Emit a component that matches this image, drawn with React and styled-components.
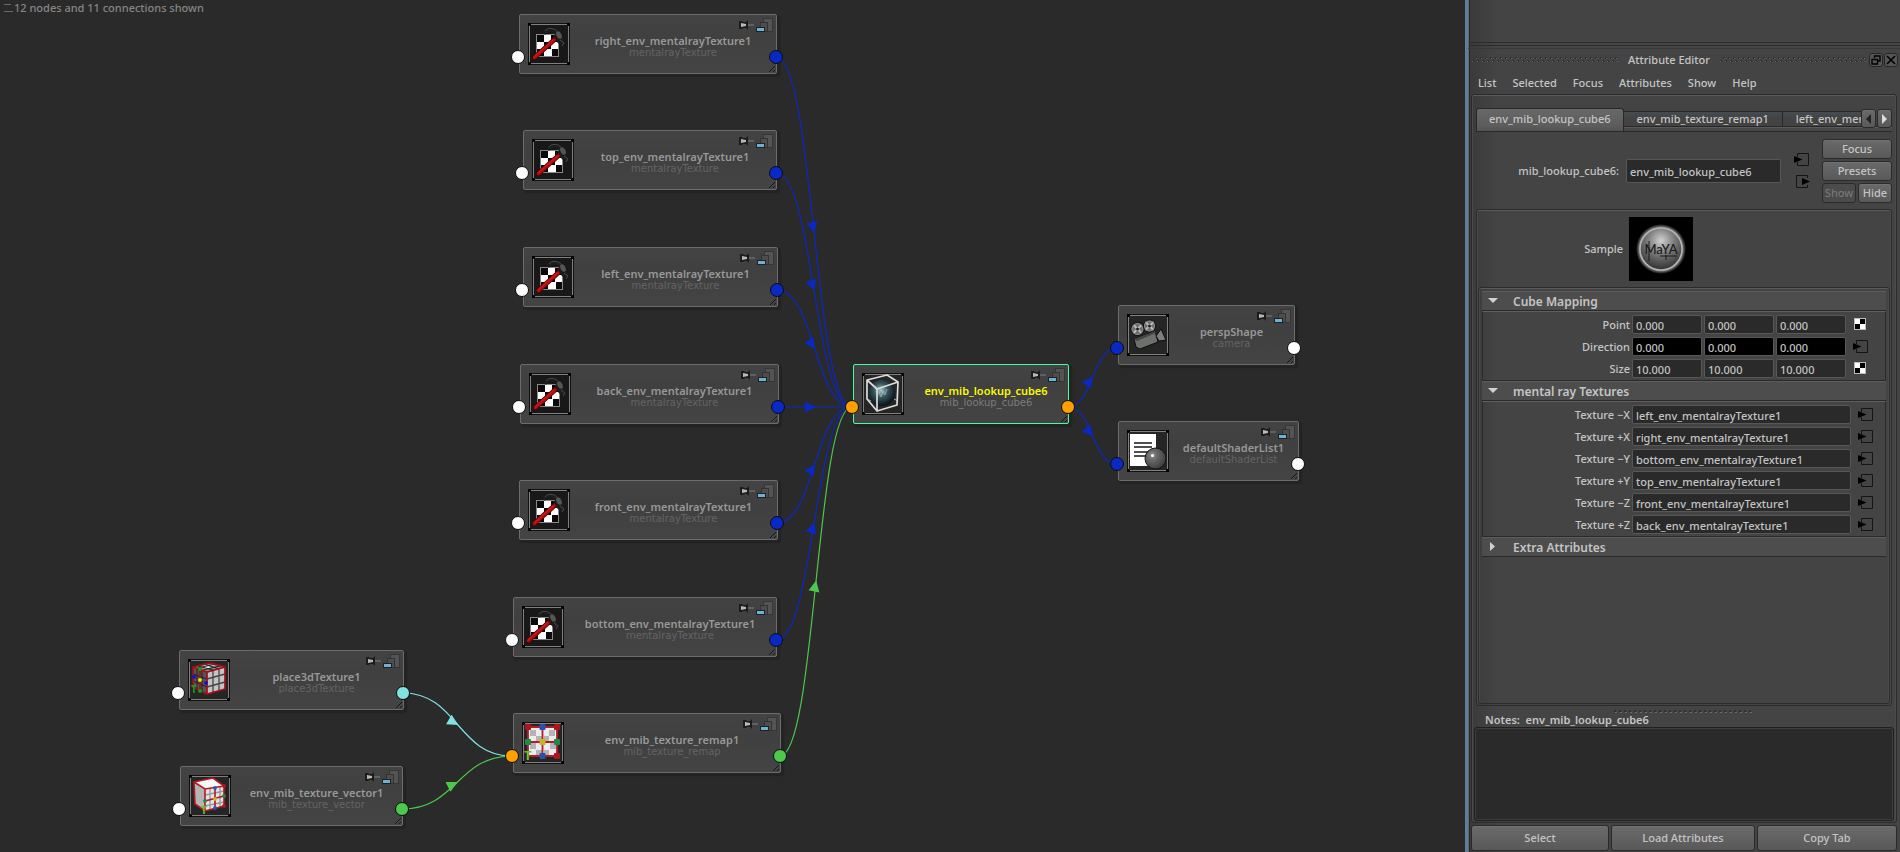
import React, { useId } from 'react';
import styled, { createGlobalStyle, css } from 'styled-components';

const GlobalStyle = createGlobalStyle`
  *, *::before, *::after { box-sizing: border-box; }
  body {
    margin: 0;
    background: #2a2a2a;
    color: #c4c4c4;
    font: 500 11px/14px "Noto Sans", "Open Sans", sans-serif;
  }
  button, input, textarea { font: inherit; color: inherit; margin: 0; }
`;

/* ---------- shell ---------- */

const Shell = styled.div`
  display: flex;
  min-height: 100vh;
`;

const Canvas = styled.main`
  position: relative;
  flex: 1;
  min-width: 0;
  overflow: hidden;
  background: #2a2a2a;
`;

const Status = styled.p`
  display: flex;
  align-items: center;
  gap: 1px;
  margin: 0;
  padding: 1px 3px;
  color: #868686;
`;

const Wires = styled.svg`
  position: absolute;
  top: 0;
  left: 0;
  width: 100%;
  height: 100%;
`;

/* ---------- graph nodes ---------- */

const NodeCard = styled.article`
  position: absolute;
  left: ${(p) => p.$x}px;
  top: ${(p) => p.$y}px;
  width: ${(p) => p.$w}px;
  height: 60px;
  display: flex;
  padding: 8px 0 0 8px;
  border: 1px solid ${(p) => (p.$active ? '#4dfa9f' : '#6c6c6c')};
  border-radius: 2px;
  background: linear-gradient(#434343, #404040 40%, #444);
  box-shadow: 2px 2px 1px 1px #232323;
`;

const Thumb = styled.svg`
  flex: none;
  width: 42px;
  height: 42px;
`;

const NodeText = styled.div`
  flex: 1;
  min-width: 0;
  padding-top: 12px;
  text-align: center;
  white-space: nowrap;
`;

const NodeName = styled.h3`
  margin: 0;
  font-size: 11px;
  line-height: 12px;
  font-weight: 600;
  color: ${(p) => (p.$active ? '#fafa00' : '#989898')};
`;

const NodeType = styled.p`
  margin: 0;
  font: 10px/12px "DejaVu Sans", sans-serif;
  color: ${(p) => (p.$active ? '#7c7c7c' : '#646464')};
`;

const Port = styled.span`
  position: absolute;
  top: 35px;
  ${(p) => (p.$side === 'in' ? css`left: -9px;` : css`right: -7px;`)}
  width: 14px;
  height: 14px;
  border: 1px solid #0c0c0c;
  border-radius: 50%;
  background: ${(p) => p.$color};
`;

const NodeBadges = styled.svg`
  position: absolute;
  top: 2px;
  right: 2px;
  width: 36px;
  height: 16px;
`;

const ResizeGrip = styled.svg`
  position: absolute;
  right: 0;
  bottom: 0;
  width: 8px;
  height: 8px;
`;

function ThumbFrame({ fill = '#252525', children }) {
  return (
    <Thumb viewBox="0 0 42 42" aria-hidden="true">
      <rect width="42" height="42" rx="1" fill="#111" />
      <rect x="1.5" y="1.5" width="39" height="39" fill={fill} stroke="#808080" />
      <path d="M1 3V1H3M39 1H41V3M41 39V41H39M3 41H1V39" fill="none" stroke="#000" strokeWidth="2" />
      {children}
    </Thumb>
  );
}

function HammerThumb() {
  return (
    <ThumbFrame fill="#181818">
      <rect x="8.500" y="11.500" width="22" height="22" fill="#fff" stroke="#888" />
      <path d="M9 12h7v7h-7zM23 12h7v7h-7zM16 19h7v7h-7zM9 26h7v7h-7zM24 26h6v7h-6z" fill="#0a0a0a" />
      <path d="M15 9C17 4 24 3 29 7L36 17 35 22 31 21 25 15 27 11C24 7 19 8 17 12Z" fill="#1d1d1d" />
      <path d="M17 8C20 4 26 5 29 8M32 17L36 20 34 23" fill="none" stroke="#4a4a4a" strokeWidth="1" />
      <ellipse cx="31" cy="12" rx="2.500" ry="4" transform="rotate(-25 31 12)" fill="#555" />
      <path d="M6.500 34.500L26 17" stroke="#4a0404" strokeWidth="5" strokeLinecap="round" />
      <path d="M6.500 34.500L26 17" stroke="#b80d0d" strokeWidth="3.400" strokeLinecap="round" />
      <path d="M6.500 33.500L25 17" stroke="#d02424" strokeWidth="1" strokeLinecap="round" />
    </ThumbFrame>
  );
}

const Handle = ({ x, y, c, s = 1.7 }) => (
  <rect x={x - s} y={y - s} width={s * 2} height={s * 2} rx="1" fill={c} />
);

function PlaceThumb() {
  return (
    <ThumbFrame>
      <path d="M5 8L22 4 37 8 19 13Z" fill="#8d8d8d" />
      <path d="M5 8L19 13V35L5 28Z" fill="#555" />
      <path d="M19 13L37 8V30L19 35Z" fill="#c4c4c4" />
      <path d="M12 8L17 6 24 8 18 10ZM22 5L27 6 24 7Z" fill="#e8e8e8" />
      <path d="M25 11V33M31 10V31M19 20L37 15M19 28L37 23" stroke="#444" strokeWidth="1.300" />
      <path d="M9 10V30M14 11V33M5 15L19 20M5 22L19 28M10 7L25 11M16 5L31 10M10 9L27 5M15 11L32 7" stroke="#222" />
      <path d="M5 8L22 4 37 8V30L19 35 5 28ZM5 8L19 13 37 8M19 13V35M12 11V31" fill="none" stroke="#a01018" strokeWidth="1.700" />
      <Handle x={12} y={10} c="#12a012" />
      <Handle x={12} y={32} c="#12a012" />
      <Handle x={6} y={18} c="#1010d8" />
      <Handle x={18} y={24} c="#1010d8" />
      <Handle x={12} y={21} c="#f0e818" />
      <text x="3" y="34" fontSize="10" fontWeight="700" fill="#18a018">T</text>
    </ThumbFrame>
  );
}

function VectorThumb() {
  return (
    <ThumbFrame>
      <path d="M5 7L24 3 35 11 16 14Z" fill="#f8f8f8" />
      <path d="M5 7L16 14V36L6 29Z" fill="#b5b5b5" />
      <path d="M16 14L35 11V31L16 36Z" fill="#e4e4e4" />
      <path d="M21 13V35M31 12V32M16 20L35 16M16 31L35 27" stroke="#999" strokeWidth="1.400" />
      <path d="M5 7L24 3 35 11V31L16 36 6 29ZM5 7L16 14 35 11M16 14V36" fill="none" stroke="#b81822" strokeWidth="1.600" />
      <path d="M26 13V33M16 26L35 21" stroke="#b01822" strokeWidth="1.600" />
      <Handle x={35} y={11} c="#b01820" />
      <Handle x={35} y={31} c="#b01820" />
      <Handle x={26} y={13} c="#2558b8" />
      <Handle x={26} y={33} c="#2558b8" />
      <Handle x={16} y={26} c="#208a48" />
      <Handle x={35} y={21} c="#208a48" />
      <Handle x={26} y={24} c="#c8b828" />
      <text x="12" y="39" fontSize="10" fontWeight="700" fill="#6cc030">T</text>
    </ThumbFrame>
  );
}

function RemapThumb() {
  return (
    <ThumbFrame>
      <rect x="6" y="5" width="29" height="29" rx="4" fill="#ececec" />
      <path d="M8 8h6v6h-6zM27 8h6v6h-6zM14 14h6v5h-6zM22 14h5v5h-5zM8 21h6v6h-6zM28 21h6v6h-6zM14 28h6v5h-6zM22 28h5v5h-5z" fill="#b4b4b4" />
      <path d="M6 5H35V34H6ZM20.500 5V34M6 20H35" fill="none" stroke="#b51c26" strokeWidth="1.800" />
      {[[6, 5], [35, 5], [35, 34]].map(([x, y]) => <Handle key={x + y} x={x} y={y} c="#a81620" s={3} />)}
      <Handle x={20.5} y={5} c="#2850b0" s={3} />
      <Handle x={20.5} y={34} c="#2850b0" s={3} />
      <Handle x={6} y={20} c="#1d8a48" s={3} />
      <Handle x={35} y={20} c="#1d8a48" s={3} />
      <Handle x={20.5} y={20} c="#c4b42a" s={3} />
      <text x="2" y="38" fontSize="13" fontWeight="700" fill="#6cc030">T</text>
    </ThumbFrame>
  );
}

function CubeThumb() {
  return (
    <ThumbFrame>
      <defs>
        <radialGradient id="cubeBall" cx="0.45" cy="0.4" r="0.6">
          <stop offset="0" stopColor="#a8c6cc" />
          <stop offset="0.45" stopColor="#35565c" />
          <stop offset="1" stopColor="#071318" />
        </radialGradient>
      </defs>
      <circle cx="20" cy="20" r="13" fill="url(#cubeBall)" />
      <path d="M17 19L19 24 21 18 23 22 25 16" fill="none" stroke="#c0d4d8" strokeOpacity="0.5" />
      <path d="M5 26L9 28M36 28L32 26" fill="none" stroke="#9fb4b6" />
      <path d="M5 7L25 2 36 9 15 16ZM5 7V26L15 38V16M15 38L35 32 36 9" fill="none" stroke="#dcdcdc" strokeWidth="1.700" strokeLinejoin="round" />
    </ThumbFrame>
  );
}

function CameraThumb() {
  return (
    <ThumbFrame>
      {[[10.5, 15, 6.5], [22.5, 12, 6]].map(([x, y, r]) => (
        <g key={x}>
          <circle cx={x} cy={y} r={r} fill="#6e6e6e" stroke="#0c0c0c" />
          <path d={`M${x - 4} ${y - 4}l8 8m0-8l-8 8`} stroke="#bdbdbd" strokeWidth="1.800" />
          <circle cx={x} cy={y} r={r - 1} fill="none" stroke="#8a8a8a" />
          <circle cx={x} cy={y} r="1.500" fill="#222" />
        </g>
      ))}
      <path d="M7 25L28 17 31 28 13 35 9 33Z" fill="#6d706d" stroke="#0d0d0d" />
      <path d="M7 25L28 17 29 19 10 27Z" fill="#454745" />
      <path d="M29 22L34 15 39 26 32 27Z" fill="#7c7f7c" stroke="#0d0d0d" />
    </ThumbFrame>
  );
}

function ShaderThumb() {
  return (
    <ThumbFrame>
      <defs>
        <radialGradient id="shaderBall" cx="0.35" cy="0.35" r="0.7">
          <stop offset="0" stopColor="#999" />
          <stop offset="0.3" stopColor="#6b6b6b" />
          <stop offset="1" stopColor="#3c3c3c" />
        </radialGradient>
      </defs>
      <rect x="3" y="4" width="26" height="32" fill="#fff" />
      <path d="M7 13H25M7 17H25M7 22H22M7 26H20" stroke="#161616" strokeWidth="1.400" />
      <circle cx="28.500" cy="28.500" r="10.500" fill="url(#shaderBall)" stroke="#141414" />
      <circle cx="25.500" cy="25.500" r="1.500" fill="#fff" />
    </ThumbFrame>
  );
}

const THUMBS = {
  hammer: HammerThumb, place: PlaceThumb, vector: VectorThumb, remap: RemapThumb,
  cube: CubeThumb, camera: CameraThumb, shader: ShaderThumb,
};

const WHITE = '#ffffff';
const BLUE = '#0a28c4';
const ORANGE = '#ffa000';
const GREEN = '#4cc84c';
const CYAN = '#82e2e2';

const NODES = [
  { id: 'right', x: 519, y: 14, w: 258, name: 'right_env_mentalrayTexture1', type: 'mentalrayTexture', thumb: 'hammer', in: WHITE, out: BLUE },
  { id: 'top', x: 523, y: 130, w: 254, name: 'top_env_mentalrayTexture1', type: 'mentalrayTexture', thumb: 'hammer', in: WHITE, out: BLUE },
  { id: 'left', x: 523, y: 247, w: 255, name: 'left_env_mentalrayTexture1', type: 'mentalrayTexture', thumb: 'hammer', in: WHITE, out: BLUE },
  { id: 'back', x: 520, y: 364, w: 259, name: 'back_env_mentalrayTexture1', type: 'mentalrayTexture', thumb: 'hammer', in: WHITE, out: BLUE },
  { id: 'front', x: 519, y: 480, w: 259, name: 'front_env_mentalrayTexture1', type: 'mentalrayTexture', thumb: 'hammer', in: WHITE, out: BLUE },
  { id: 'bottom', x: 513, y: 597, w: 264, name: 'bottom_env_mentalrayTexture1', type: 'mentalrayTexture', thumb: 'hammer', in: WHITE, out: BLUE },
  { id: 'place', x: 179, y: 650, w: 225, name: 'place3dTexture1', type: 'place3dTexture', thumb: 'place', in: WHITE, out: CYAN },
  { id: 'vector', x: 180, y: 766, w: 223, name: 'env_mib_texture_vector1', type: 'mib_texture_vector', thumb: 'vector', in: WHITE, out: GREEN },
  { id: 'remap', x: 513, y: 713, w: 268, name: 'env_mib_texture_remap1', type: 'mib_texture_remap', thumb: 'remap', in: ORANGE, out: GREEN },
  { id: 'cube', x: 853, y: 364, w: 216, name: 'env_mib_lookup_cube6', type: 'mib_lookup_cube6', thumb: 'cube', in: ORANGE, out: ORANGE, active: true },
  { id: 'persp', x: 1118, y: 305, w: 177, name: 'perspShape', type: 'camera', thumb: 'camera', in: BLUE, out: WHITE },
  { id: 'shader', x: 1118, y: 421, w: 181, name: 'defaultShaderList1', type: 'defaultShaderList', thumb: 'shader', in: BLUE, out: WHITE },
];

const LINKS = [
  ['right', 'cube', BLUE], ['top', 'cube', BLUE], ['left', 'cube', BLUE], ['back', 'cube', BLUE],
  ['front', 'cube', BLUE], ['bottom', 'cube', BLUE], ['remap', 'cube', GREEN],
  ['place', 'remap', CYAN], ['vector', 'remap', GREEN],
  ['cube', 'persp', BLUE], ['cube', 'shader', BLUE],
];

function Link({ from, to, color }) {
  const a = NODES.find((n) => n.id === from);
  const b = NODES.find((n) => n.id === to);
  const x1 = a.x + a.w - 1;
  const y1 = a.y + 43;
  const x2 = b.x - 1;
  const y2 = b.y + 43;
  const mx = (x1 + x2) / 2;
  const my = (y1 + y2) / 2;
  const angle = (Math.atan2(y2 - y1, x2 - x1) * 180) / Math.PI;
  return (
    <g>
      <path d={`M${x1} ${y1}C${mx} ${y1} ${mx} ${y2} ${x2} ${y2}`} fill="none" stroke={color} strokeWidth="1.200" />
      <path d="M1 0L-10 -5.500V5.500Z" fill={color} transform={`translate(${mx} ${my}) rotate(${angle})`} />
    </g>
  );
}

function Node({ node }) {
  const Icon = THUMBS[node.thumb];
  return (
    <NodeCard $x={node.x} $y={node.y} $w={node.w} $active={node.active}>
      <Icon />
      <NodeText>
        <NodeName $active={node.active}>{node.name}</NodeName>
        <NodeType $active={node.active}>{node.type}</NodeType>
      </NodeText>
      <NodeBadges viewBox="0 0 36 16" aria-hidden="true">
        <path d="M1 4H4L5 5H8L10 3V13L8 11H5L4 12H1Z" fill="#1c1c1c" />
        <path d="M3 6L8 7V9L3 10Z" fill="#b8b8b8" />
        <path d="M10 8H16" stroke="#808080" />
        <rect x="25.500" y="1.500" width="9" height="13" fill="#545454" stroke="#363636" />
        <rect x="22.500" y="5.500" width="7" height="9" fill="#4d4d4d" stroke="#333" />
        <rect x="18.500" y="10.500" width="8" height="4" fill="#6cb2d6" stroke="#202020" />
      </NodeBadges>
      <ResizeGrip viewBox="0 0 8 8" aria-hidden="true">
        <path d="M1 7L7 1M5 7L7 5" stroke="#161616" />
      </ResizeGrip>
      <Port $side="in" $color={node.in} />
      <Port $side="out" $color={node.out} />
    </NodeCard>
  );
}

/* ---------- attribute editor ---------- */

const Panel = styled.aside`
  flex: none;
  width: 435px;
  display: flex;
  flex-direction: column;
  border-left: 3px solid #5d7e9c;
  box-shadow: inset 1px 0 #6a6660, inset 2px 0 #2a2a2a;
  background: linear-gradient(90deg, #3a3a3a, #444 30px);
`;

const DockStub = styled.div`
  height: 46px;
  margin-left: 1px;
  border-bottom: 1px solid #2c2c2c;

  &::before {
    content: '';
    display: block;
    height: 43px;
    border-bottom: 1px solid #2c2c2c;
  }
`;

const TitleBar = styled.header`
  display: flex;
  align-items: center;
  gap: 10px;
  height: 24px;
  margin-top: 2px;
  padding: 0 2px 2px 4px;
  border-top: 1px solid #383838;
`;

const Title = styled.h1`
  margin: 0;
  font: inherit;
`;

const Grip = styled.span`
  flex: 1;
  height: 6px;
  background:
    repeating-linear-gradient(90deg, #6a6a6a 0 1px, #2c2c2c 1px 2px, transparent 2px 5px) 0 4px / 100% 1px no-repeat,
    repeating-linear-gradient(90deg, #2c2c2c 0 1px, #6a6a6a 1px 2px, transparent 2px 5px) 3px 1px / 100% 1px no-repeat,
    repeating-linear-gradient(90deg, #303030 0 2px, transparent 2px 5px) 0 3px / 100% 1px no-repeat,
    repeating-linear-gradient(90deg, #303030 0 2px, transparent 2px 5px) 3px 0 / 100% 1px no-repeat;
`;

const WindowButtons = styled.div`
  display: flex;
  gap: 1px;
  margin-left: -7px;
`;

const WindowButton = styled.button`
  display: grid;
  place-items: center;
  width: 14px;
  height: 14px;
  padding: 0;
  border: 1px solid #262626;
  border-radius: 3px;
  background: #565656;
`;

const MenuBar = styled.nav`
  display: flex;
  gap: 16px;
  padding: 4px 9px 4px 10px;
`;

const MenuItem = styled.button`
  padding: 0;
  border: 0;
  background: none;
`;

const frame = css`
  display: flex;
  flex-direction: column;
  border: 1px solid #2b2b2b;
  border-radius: 3px;
  box-shadow: inset 0 1px #5a5a5a, inset 1px 0 #4b4b4b, inset -1px 0 #4b4b4b;
`;

const OuterFrame = styled.section`
  ${frame}
  flex: 1;
  margin: 0 3px 2px 3px;
  padding: 13px 4px 1px;
`;

const TabStrip = styled.div`
  display: flex;
  align-items: flex-end;
  height: 24px;
  overflow: hidden;
  border-bottom: 1px solid #2a2a2a;
  background: linear-gradient(#2a2a2a 0 1px, #5a5a5a 1px 2px, #484848 2px) 0 100% / 100% 5px no-repeat;
`;

const Tab = styled.button`
  flex: none;
  height: ${(p) => (p.$active ? 23 : 16)}px;
  margin-bottom: ${(p) => (p.$active ? 0 : 4)}px;
  padding: ${(p) => (p.$active ? '0 12px 3px' : '0 13px')};
  border: 1px solid #282828;
  border-width: 1px 1px ${(p) => (p.$active ? 0 : 1)}px ${(p) => (p.$active ? 1 : 0)}px;
  border-radius: ${(p) => (p.$active ? '3px 3px 0 0' : '0')};
  background: ${(p) => (p.$active ? 'linear-gradient(#686868, #5c5c5c 17px, #525252)' : 'linear-gradient(#454c52, #434343 6px)')};
  line-height: 14px;
  white-space: nowrap;
`;

const ClippedTabs = styled.div`
  display: flex;
  align-items: flex-end;
  flex: 1;
  min-width: 0;
  overflow: hidden;
`;

const TabScrollers = styled.div`
  display: flex;
  gap: 1px;
  align-self: flex-start;
  margin-top: 1px;
`;

const face = css`
  border: 1px solid #2a2a2a;
  border-radius: 3px;
  background: linear-gradient(#6a6a6a, #595959);
  box-shadow: inset 0 1px #727272;
`;

const TabScroll = styled.button`
  ${face}
  display: grid;
  place-items: center;
  width: 15px;
  height: 19px;
  padding: 0;
`;

const NodeHeader = styled.div`
  display: grid;
  grid-template-columns: 143px 155px 1fr 70px;
  column-gap: 7px;
  align-items: center;
  margin-top: 7px;
`;

const FieldLabel = styled.label`
  text-align: right;
  white-space: nowrap;
`;

const TextField = styled.input`
  min-width: 0;
  width: 100%;
  height: ${(p) => (p.$tall ? 24 : 19)}px;
  padding: 1px 3px 0;
  border: 1px solid #575757;
  border-radius: 2px;
  outline: 0;
  background: ${(p) => (p.$linked ? '#000' : '#2a2a2a')};
`;

const LinkIcons = styled.div`
  display: flex;
  flex-direction: column;
  align-items: center;
  gap: 8px;
`;

const IconButton = styled.button`
  display: block;
  padding: 0;
  border: 0;
  background: none;
  line-height: 0;
`;

const HeaderButtons = styled.div`
  display: grid;
  grid-template-columns: 1fr 1fr;
  gap: 2px;
`;

const PushButton = styled.button`
  ${face}
  height: ${(p) => (p.$tall ? 26 : 20)}px;
  padding: 0;
  grid-column: ${(p) => (p.$wide ? '1 / -1' : 'auto')};
  line-height: 14px;

  &:disabled {
    background: #4b4b4b;
    box-shadow: none;
    color: #777;
  }
`;

const ContentFrame = styled.section`
  ${frame}
  flex: 1;
  margin-top: 6px;
  padding: 7px 1px 1px;
`;

const SampleRow = styled.div`
  display: flex;
  align-items: center;
  gap: 6px;
  height: 64px;
  margin-bottom: 6px;
`;

const SampleLabel = styled.span`
  width: 145px;
  text-align: right;
`;

const Swatch = styled.svg`
  width: 64px;
  height: 64px;
  background: #000;
`;

const SectionFrame = styled.div`
  ${frame}
  flex: 1;
  padding: 3px;
`;

const SectionHead = styled.button`
  display: flex;
  align-items: center;
  gap: 15px;
  width: 100%;
  height: 20px;
  padding: 2px 6px 0;
  border: 0;
  border-top: 1px solid #5c5c5c;
  border-bottom: 1px solid #2a2a2a;
  background: #4d4d4d;
  font-size: 12px;
  font-weight: 600;
  line-height: 16px;
  text-align: left;
`;

const SectionBody = styled.div`
  display: grid;
  gap: 3px;
  padding: 3px 0 2px;
  border: 1px solid #2a2a2a;
  border-top-color: #5f5f5f;
`;

const VectorRow = styled.div`
  display: grid;
  grid-template-columns: 147px repeat(3, 70px) 1fr;
  column-gap: 2px;
  align-items: center;
`;

const TextureRow = styled.div`
  display: grid;
  grid-template-columns: 147px 219px 1fr;
  column-gap: 2px;
  align-items: center;
`;

const RowAction = styled.div`
  padding-left: 5px;
`;

const NotesGrip = styled(Grip)`
  flex: none;
  align-self: center;
  width: 140px;
  height: 3px;
  margin-top: 4px;
  background:
    repeating-linear-gradient(90deg, #303030 0 2px, transparent 2px 5px) 0 0 / 100% 2px no-repeat,
    repeating-linear-gradient(90deg, transparent 0 1px, #6c6c6c 1px 3px, transparent 3px 5px) 0 2px / 100% 1px no-repeat;
`;

const NotesLabel = styled.label`
  padding-left: 9px;
  font-weight: 600;
  line-height: 14px;
  white-space: pre;
`;

const NotesBox = styled.textarea`
  display: block;
  height: 94px;
  margin: 0 -2px;
  resize: none;
  border: 1px solid #202020;
  border-radius: 3px;
  outline: 0;
  background: #2a2a2a;
  box-shadow: inset 0 0 0 1px #3e3e3e;
`;

const Footer = styled.footer`
  display: grid;
  grid-template-columns: 138px 1fr 140px;
  gap: 2px;
  padding: 0 3px 1px;
`;

const PlugIn = () => (
  <svg width="16" height="14" viewBox="0 0 16 14" aria-hidden="true">
    <path d="M3.500 4V.5H14.500V12.500H3.500V9" fill="none" stroke="#141414" />
    <path d="M0 3L8.500 6.500 0 10Z" fill="#000" />
  </svg>
);

const PlugOut = () => (
  <svg width="16" height="14" viewBox="0 0 16 14" aria-hidden="true">
    <path d="M13.500 3V.5H2.500V12.500H13.500V10" fill="none" stroke="#141414" />
    <path d="M8 3L16 6.500 8 10Z" fill="#000" />
  </svg>
);

const Checker = () => (
  <svg width="16" height="14" viewBox="0 0 16 14" aria-hidden="true">
    <rect x="1.500" y="0.500" width="11" height="11" fill="#fff" stroke="#bbb" />
    <path d="M7 1h5v5h-5zM2 6h5v5h-5z" fill="#000" />
  </svg>
);

function NumberRow({ label, value, linked }) {
  const id = useId();
  return (
    <VectorRow>
      <FieldLabel htmlFor={id}>{label}</FieldLabel>
      {['X', 'Y', 'Z'].map((axis, i) => (
        <TextField
          key={axis}
          id={i === 0 ? id : undefined}
          aria-label={i === 0 ? undefined : `${label} ${axis}`}
          defaultValue={value}
          $linked={linked}
        />
      ))}
      <RowAction>
        <IconButton aria-label={`${label} connection`}>{linked ? <PlugIn /> : <Checker />}</IconButton>
      </RowAction>
    </VectorRow>
  );
}

function TextureField({ label, value }) {
  const id = useId();
  return (
    <TextureRow>
      <FieldLabel htmlFor={id}>{label}</FieldLabel>
      <TextField id={id} defaultValue={value} />
      <RowAction>
        <IconButton aria-label={`${label} connection`}><PlugIn /></IconButton>
      </RowAction>
    </TextureRow>
  );
}

function SectionToggle({ open, children }) {
  return (
    <SectionHead aria-expanded={open}>
      <svg width="10" height="12" viewBox="0 0 10 12" aria-hidden="true">
        <path d={open ? 'M0 2H10L5 7Z' : 'M2 0V9L7 4.500Z'} fill="#d2d2d2" />
      </svg>
      {children}
    </SectionHead>
  );
}

const TEXTURES = [
  ['Texture −X', 'left_env_mentalrayTexture1'],
  ['Texture +X', 'right_env_mentalrayTexture1'],
  ['Texture −Y', 'bottom_env_mentalrayTexture1'],
  ['Texture +Y', 'top_env_mentalrayTexture1'],
  ['Texture −Z', 'front_env_mentalrayTexture1'],
  ['Texture +Z', 'back_env_mentalrayTexture1'],
];

function AttributeEditor() {
  return (
    <Panel>
      <DockStub />
      <TitleBar>
        <Grip />
        <Title>Attribute Editor</Title>
        <Grip />
        <WindowButtons>
          <WindowButton aria-label="Float">
            <svg width="10" height="10" viewBox="0 0 10 10" aria-hidden="true">
              <path d="M3.500 3V1H9V6H7M1 4.500H6.500V9H1Z" fill="none" stroke="#000" strokeWidth="1.400" />
            </svg>
          </WindowButton>
          <WindowButton aria-label="Close">
            <svg width="10" height="10" viewBox="0 0 10 10" aria-hidden="true">
              <path d="M1 1L9 9M9 1L1 9" stroke="#000" strokeWidth="1.700" />
            </svg>
          </WindowButton>
        </WindowButtons>
      </TitleBar>
      <MenuBar>
        {['List', 'Selected', 'Focus', 'Attributes', 'Show', 'Help'].map((m) => <MenuItem key={m}>{m}</MenuItem>)}
      </MenuBar>

      <OuterFrame>
        <TabStrip>
          <ClippedTabs role="tablist">
            <Tab role="tab" aria-selected="true" $active>env_mib_lookup_cube6</Tab>
            <Tab role="tab" aria-selected="false">env_mib_texture_remap1</Tab>
            <Tab role="tab" aria-selected="false">left_env_mentalrayTexture1</Tab>
          </ClippedTabs>
          <TabScrollers>
            <TabScroll aria-label="Previous tabs">
              <svg width="7" height="10" viewBox="0 0 7 10" aria-hidden="true"><path d="M6 0V10L1 5Z" fill="#222" /></svg>
            </TabScroll>
            <TabScroll aria-label="Next tabs">
              <svg width="7" height="10" viewBox="0 0 7 10" aria-hidden="true"><path d="M1 0V10L6 5Z" fill="#ddd" /></svg>
            </TabScroll>
          </TabScrollers>
        </TabStrip>

        <NodeHeader>
          <FieldLabel htmlFor="node-name">mib_lookup_cube6:</FieldLabel>
          <TextField id="node-name" defaultValue="env_mib_lookup_cube6" $tall />
          <LinkIcons>
            <IconButton aria-label="Go to input"><PlugIn /></IconButton>
            <IconButton aria-label="Go to output"><PlugOut /></IconButton>
          </LinkIcons>
          <HeaderButtons>
            <PushButton $wide>Focus</PushButton>
            <PushButton $wide>Presets</PushButton>
            <PushButton disabled>Show</PushButton>
            <PushButton>Hide</PushButton>
          </HeaderButtons>
        </NodeHeader>

        <ContentFrame>
          <SampleRow>
            <SampleLabel>Sample</SampleLabel>
            <Swatch viewBox="0 0 64 64" role="img" aria-label="Material sample">
              <defs>
                <radialGradient id="mayaBall" cx="0.5" cy="0.3" r="0.7">
                  <stop offset="0" stopColor="#d0d0d0" />
                  <stop offset="0.45" stopColor="#7c7c7c" />
                  <stop offset="1" stopColor="#303030" />
                </radialGradient>
                <radialGradient id="mayaGlow">
                  <stop offset="0.82" stopColor="#aaa" />
                  <stop offset="1" stopColor="#000" />
                </radialGradient>
              </defs>
              <circle cx="32" cy="32" r="25" fill="url(#mayaGlow)" />
              <circle cx="32" cy="32" r="21" fill="url(#mayaBall)" stroke="#b4b4b4" strokeWidth="1.500" />
              <text x="32" y="37" textAnchor="middle" fontFamily="Lato, sans-serif" fontSize="13" fill="#191919">MaYA</text>
              <path d="M20 24V44M37 38V43M31 39H48" stroke="#191919" />
            </Swatch>
          </SampleRow>

          <SectionFrame>
            <SectionToggle open>Cube Mapping</SectionToggle>
            <SectionBody>
              <NumberRow label="Point" value="0.000" />
              <NumberRow label="Direction" value="0.000" linked />
              <NumberRow label="Size" value="10.000" />
            </SectionBody>
            <SectionToggle open>mental ray Textures</SectionToggle>
            <SectionBody>
              {TEXTURES.map(([label, value]) => <TextureField key={label} label={label} value={value} />)}
            </SectionBody>
            <SectionToggle open={false}>Extra Attributes</SectionToggle>
          </SectionFrame>
        </ContentFrame>

        <NotesGrip />
        <NotesLabel htmlFor="notes">{'Notes:  env_mib_lookup_cube6'}</NotesLabel>
        <NotesBox id="notes" />
      </OuterFrame>

      <Footer>
        <PushButton $tall>Select</PushButton>
        <PushButton $tall>Load Attributes</PushButton>
        <PushButton $tall>Copy Tab</PushButton>
      </Footer>
    </Panel>
  );
}

export default function App() {
  return (
    <Shell>
      <GlobalStyle />
      <Canvas>
        <Status>
          <svg width="10" height="10" viewBox="0 0 10 10" aria-hidden="true">
            <path d="M1 1.500H8M1 8.500H10" stroke="#6a6a6a" />
          </svg>
          12 nodes and 11 connections shown
        </Status>
        <Wires aria-hidden="true">
          {LINKS.map(([from, to, color]) => <Link key={from + to} from={from} to={to} color={color} />)}
        </Wires>
        {NODES.map((n) => <Node key={n.id} node={n} />)}
      </Canvas>
      <AttributeEditor />
    </Shell>
  );
}
